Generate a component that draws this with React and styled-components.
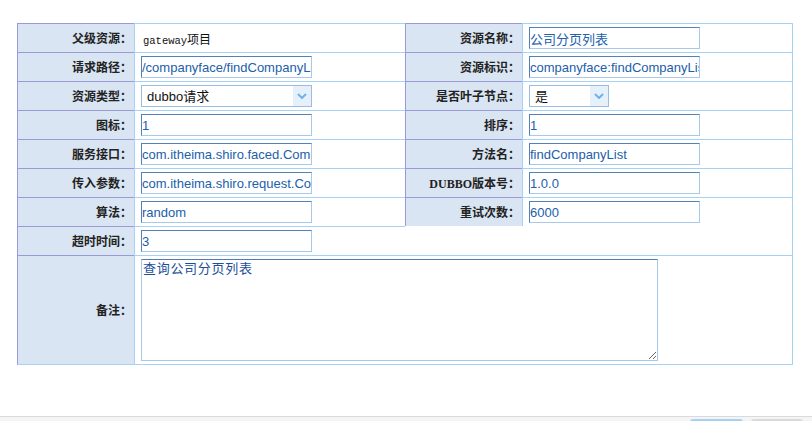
import React from "react";
import styled, { createGlobalStyle } from "styled-components";

const Global = createGlobalStyle`
  html, body { margin: 0; padding: 0; background: #fff; overflow: hidden; }
  * { box-sizing: border-box; }
`;

const Page = styled.div`
  display: flex;
  flex-direction: column;
  width: 812px;
  height: 421px;
  overflow: hidden;
`;

const Main = styled.main`
  height: 416px;
  flex: none;
  padding: 23px 0 0 17px;
`;

const FormGrid = styled.div`
  display: grid;
  grid-template-columns: 117px 271px 117px 271px;
  grid-template-rows: repeat(8, 29px) 110px;
  width: 776px;
`;

const Label = styled.div`
  display: flex;
  align-items: center;
  justify-content: flex-end;
  padding-right: 2px;
  background: #d9e5f3;
  border-top: 1px solid #9a9ad6;
  border-left: 1px solid #9a9ad6;
  border-bottom: ${(p) => (p.$bottom ? "1px solid #a6d2f5" : "0")};
  font-family: "Liberation Serif", "Noto Sans CJK SC", serif;
  font-weight: bold;
  font-size: 12px;
  color: #222;
  white-space: nowrap;
`;

const Value = styled.div`
  display: flex;
  align-items: ${(p) => (p.$top ? "flex-start" : "center")};
  padding: ${(p) => (p.$top ? "3px 0 0 6px" : "0 0 0 6px")};
  grid-column: span ${(p) => p.$span || 1};
  border-top: 1px solid #a6d2f5;
  border-left: 1px solid #a6d2f5;
  border-right: ${(p) => (p.$edge ? "1px solid #a6d2f5" : "0")};
  border-bottom: ${(p) => (p.$bottom ? "1px solid #a6d2f5" : "0")};
  min-width: 0;
`;

const Empty = styled.div`
  grid-column: span 2;
  border-right: 1px solid #a6d2f5;
`;

const PlainText = styled.span`
  font-family: "Noto Sans CJK SC", sans-serif;
  font-size: 12px;
  color: #111;
  padding-left: 2px;
`;

const Mono = styled.span`
  font-family: "Liberation Mono", monospace;
  font-size: 10.5px;
`;

const TextInput = styled.input`
  width: ${(p) => p.$w || 171}px;
  height: 22px;
  padding: 0;
  margin: 0;
  border: 1px solid;
  border-color: #5482b8 #a8c9ea #a8c9ea #5482b8;
  background: #fff;
  font-family: "Liberation Sans", "Noto Sans CJK SC", sans-serif;
  font-size: 13px;
  color: #2160ab;
  outline: none;
`;

const SelectWrap = styled.div`
  position: relative;
  width: ${(p) => p.$w}px;
  height: 22px;
`;

const NativeSelect = styled.select`
  appearance: none;
  -webkit-appearance: none;
  width: 100%;
  height: 100%;
  margin: 0;
  padding: 0 20px 0 5px;
  border: 1px solid #9dbde0;
  border-radius: 0;
  background: #fff;
  font-family: "Liberation Sans", "Noto Sans CJK SC", sans-serif;
  font-size: 13px;
  color: #111;
  outline: none;
`;

const Arrow = styled.span`
  position: absolute;
  top: 1px;
  right: 1px;
  bottom: 1px;
  width: 18px;
  display: flex;
  align-items: center;
  justify-content: center;
  background: #e6f0fb;
  pointer-events: none;
`;

const Remark = styled.textarea`
  width: 517px;
  height: 102px;
  margin: 0;
  padding: 0 1px;
  border: 1px solid;
  border-color: #4f7db3 #a8c9ea #a8c9ea #a8c9ea;
  font-family: "Noto Sans CJK SC", sans-serif;
  font-size: 13px;
  letter-spacing: 0.7px;
  line-height: 16px;
  color: #1b4f9b;
  outline: none;
`;

const Footer = styled.footer`
  display: flex;
  justify-content: flex-end;
  gap: 8px;
  height: 5px;
  flex: none;
  overflow: hidden;
  padding: 2px 9px 0 0;
  border-top: 1px solid #d9d9e1;
  background: #f4f4f4;
`;

const FootButton = styled.button`
  width: ${(p) => p.$w}px;
  height: 28px;
  flex: none;
  border: 1px solid ${(p) => (p.$primary ? "#9fcdf0" : "#d6d6d6")};
  border-top: 2px solid ${(p) => (p.$primary ? "#a5d1f2" : "#dadada")};
  border-radius: 3px;
  background: ${(p) => (p.$primary ? "#e9f4fd" : "#f7f7f7")};
  font-size: 12px;
`;

const Chevron = () => (
  <svg width="10" height="6" viewBox="0 0 10 6">
    <path d="M1 1 L5 5 L9 1" fill="none" stroke="#6db2ea" strokeWidth="2" />
  </svg>
);

const Select = ({ w, value }) => (
  <SelectWrap $w={w}>
    <NativeSelect defaultValue={value}>
      <option>{value}</option>
    </NativeSelect>
    <Arrow>
      <Chevron />
    </Arrow>
  </SelectWrap>
);

const rows = [
  ["父级资源", { kind: "text" }, "资源名称", { kind: "input", v: "公司分页列表", w: 171 }],
  ["请求路径", { kind: "input", v: "/companyface/findCompanyList" }, "资源标识", { kind: "input", v: "companyface:findCompanyList", w: 171 }],
  ["资源类型", { kind: "select", v: "dubbo请求", w: 171 }, "是否叶子节点", { kind: "select", v: "是", w: 80 }],
  ["图标", { kind: "input", v: "1" }, "排序", { kind: "input", v: "1", w: 171 }],
  ["服务接口", { kind: "input", v: "com.itheima.shiro.faced.CompanyFace" }, "方法名", { kind: "input", v: "findCompanyList", w: 171 }],
  ["传入参数", { kind: "input", v: "com.itheima.shiro.request.CompanyReq" }, "DUBBO版本号", { kind: "input", v: "1.0.0", w: 171 }],
  ["算法", { kind: "input", v: "random" }, "重试次数", { kind: "input", v: "6000", w: 171 }],
];

const renderField = (f) => {
  if (f.kind === "text")
    return (
      <PlainText>
        <Mono>gateway</Mono>项目
      </PlainText>
    );
  if (f.kind === "select") return <Select w={f.w} value={f.v} />;
  return <TextInput $w={f.w} defaultValue={f.v} />;
};

export default function App() {
  return (
    <>
      <Global />
      <Page>
        <Main>
          <FormGrid>
            {rows.map(([l1, f1, l2, f2]) => (
              <React.Fragment key={l1}>
                <Label>{l1}：</Label>
                <Value>{renderField(f1)}</Value>
                <Label>{l2}：</Label>
                <Value $edge>{renderField(f2)}</Value>
              </React.Fragment>
            ))}
            <Label>超时时间：</Label>
            <Value>
              <TextInput defaultValue="3" />
            </Value>
            <Empty />
            <Label $bottom>备注：</Label>
            <Value $span={3} $edge $bottom $top>
              <Remark defaultValue="查询公司分页列表" />
            </Value>
          </FormGrid>
        </Main>
        <Footer>
          <FootButton $primary $w={53} />
          <FootButton $w={52} />
        </Footer>
      </Page>
    </>
  );
}
